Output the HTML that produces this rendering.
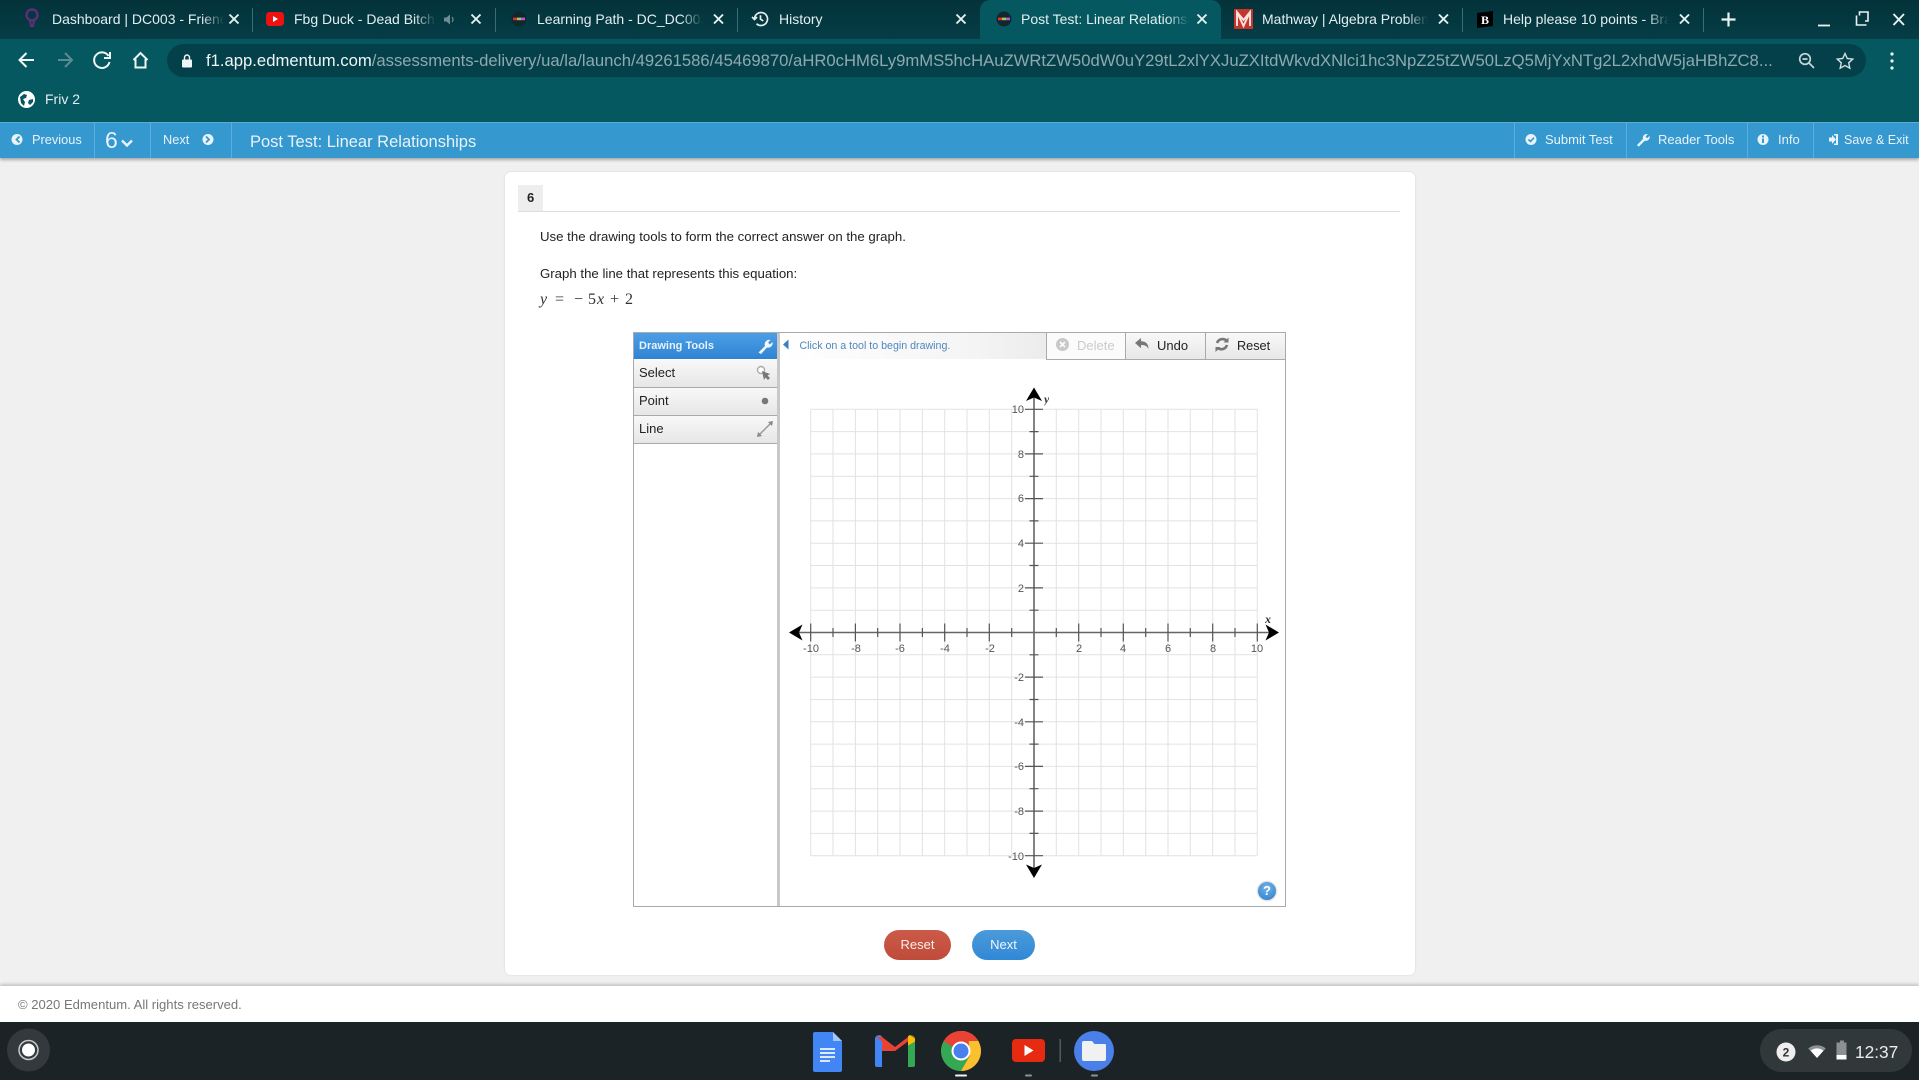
<!DOCTYPE html>
<html><head><meta charset="utf-8"><title>Post Test: Linear Relationships</title>
<style>
html,body{margin:0;padding:0;width:1919px;height:1080px;overflow:hidden;background:#f0f0f0;font-family:"Liberation Sans",sans-serif}
.a{position:absolute}
.t{position:absolute;white-space:nowrap;overflow:hidden}
.tab{color:#e3eef0;font-size:14px;line-height:20px;top:9px;height:20px;-webkit-mask-image:linear-gradient(90deg,#000 calc(100% - 22px),transparent);mask-image:linear-gradient(90deg,#000 calc(100% - 22px),transparent)}
.sep{position:absolute;top:8px;width:1px;height:24px;background:#3e6c73}
.hs{position:absolute;top:123px;width:1px;height:35px;background:#5aaedc}
.hd{position:absolute;top:130px;line-height:20px;font-size:13px;color:#e8f3fa;white-space:nowrap}
.tool{position:absolute;left:634px;width:143px;height:27px;background:linear-gradient(#f8f8f8,#e6e6e6);border-bottom:1px solid #aaa;font-size:13px;line-height:25px;color:#222;text-indent:5px}
.sb{position:absolute;top:333px;height:26px;background:linear-gradient(#f8f8f8,#e8e8e8);border-left:1px solid #aaa;border-bottom:1px solid #aaa;font-size:13px;line-height:26px;color:#222}
.lx{position:absolute;font-size:11px;color:#555;line-height:12px;width:30px;text-align:center;top:643px}
.ly{position:absolute;font-size:11px;color:#555;line-height:12px;width:30px;text-align:right;left:994px}
.m{position:absolute;top:290px;font-family:"Liberation Serif",serif;font-size:16px;line-height:20px;color:#333;white-space:nowrap}
</style></head><body>

<!-- browser chrome -->
<div class="a" style="left:0;top:0;width:1919px;height:39px;background:linear-gradient(#04323a,#053d46)"></div>
<div class="a" style="left:0;top:39px;width:1919px;height:83px;background:#05585f"></div>
<div class="a" style="left:980px;top:0;width:241px;height:39px;background:#05585f;border-radius:10px 10px 0 0"></div>

<svg class="a" style="left:24px;top:7px" width="16" height="24" viewBox="0 0 16 24"><circle cx="8" cy="8" r="5.5" fill="none" stroke="#5b2f78" stroke-width="2.4"/><path d="M6 14l1 5h2l1-5" fill="none" stroke="#5b2f78" stroke-width="2.2"/></svg>
<div class="t tab" style="left:52px;width:172px">Dashboard | DC003 - Friends</div>
<div class="sep" style="left:252px"></div>
<svg class="a" style="left:266px;top:12px" width="18" height="14" viewBox="0 0 18 14"><rect width="18" height="14" rx="3.5" fill="#ee1111"/><path d="M7 4l5 3-5 3z" fill="#fff"/></svg>
<div class="t tab" style="left:294px;width:142px">Fbg Duck - Dead Bitches</div>
<svg class="a" style="left:443px;top:13px" width="13" height="13" viewBox="0 0 13 13"><path d="M1 4.500h2.500L7 1.500v10L3.500 8.500H1z" fill="#6d8f94"/><path d="M9 4a3.500 3.500 0 0 1 0 5" fill="none" stroke="#6d8f94" stroke-width="1.200"/></svg>
<div class="sep" style="left:495px"></div>
<svg class="a" style="left:511px;top:11px" width="16" height="16" viewBox="0 0 16 16"><circle cx="8" cy="8" r="7.500" fill="#10282c"/><rect x="2" y="6.600" width="4" height="2.600" fill="#d33"/><rect x="6" y="6.600" width="4" height="2.600" fill="#9c5"/><rect x="10" y="6.600" width="4" height="2.600" fill="#b5d"/></svg>
<div class="t tab" style="left:537px;width:166px">Learning Path - DC_DC003 -</div>
<div class="sep" style="left:737px"></div>
<svg class="a" style="left:751px;top:10px" width="18" height="18" viewBox="0 0 18 18" fill="none" stroke="#e3eef0" stroke-width="1.700"><path d="M3.500 9a6.500 6.500 0 1 1 2 4.700"/><path d="M1 7l2.500 2.500L6 7"/><path d="M9.500 5.200v4l2.800 1.700"/></svg>
<div class="t tab" style="left:779px;width:100px">History</div>
<svg class="a" style="left:996px;top:11px" width="16" height="16" viewBox="0 0 16 16"><circle cx="8" cy="8" r="7.500" fill="#10282c"/><rect x="2" y="6.600" width="4" height="2.600" fill="#d33"/><rect x="6" y="6.600" width="4" height="2.600" fill="#9c5"/><rect x="10" y="6.600" width="4" height="2.600" fill="#b5d"/></svg>
<div class="t tab" style="left:1021px;width:168px">Post Test: Linear Relationships</div>
<svg class="a" style="left:1234px;top:9px" width="19" height="20" viewBox="0 0 19 20"><rect width="19" height="20" fill="#c4352e"/><path d="M3 17V3l6.500 8L16 3v14M3 3l6.500 14L16 3" fill="none" stroke="#fbe3dc" stroke-width="1.900"/></svg>
<div class="t tab" style="left:1262px;width:166px">Mathway | Algebra Problem</div>
<div class="sep" style="left:1462px"></div>
<svg class="a" style="left:1476px;top:10px" width="18" height="19" viewBox="0 0 18 19"><path d="M1 3l16-2v15L1 18z" fill="#000"/><text x="9" y="14" font-family="Liberation Serif" font-weight="bold" font-size="12" fill="#fff" text-anchor="middle">B</text></svg>
<div class="t tab" style="left:1503px;width:166px">Help please 10 points - Brainly</div>
<div class="sep" style="left:1703px"></div>

<svg class="a" style="left:0;top:0;pointer-events:none" width="1919" height="39" fill="none" stroke="#e9f2f3" stroke-width="1.900">
<path d="M229.500 14.500l9 9M238.500 14.500l-9 9"/>
<path d="M471.500 14.500l9 9M480.500 14.500l-9 9"/>
<path d="M714 14.500l9 9M723 14.500l-9 9"/>
<path d="M956.500 14.500l9 9M965.500 14.500l-9 9"/>
<path d="M1197.500 14.500l9 9M1206.500 14.500l-9 9"/>
<path d="M1439 14.500l9 9M1448 14.500l-9 9"/>
<path d="M1680 14.500l9 9M1689 14.500l-9 9"/>
<path d="M1728.500 12.500v14M1721.500 19.500h14" stroke-width="2.200"/>
<path d="M1818 25.500h12" stroke-width="1.800"/>
<path d="M1856.500 15.500v9.500h10M1859.500 15.500v-3.500h8.500v9h-3" stroke-width="1.600"/>
<path d="M1893.500 14l10.500 11M1904 14l-10.500 11" stroke-width="1.900"/>
</svg>

<!-- toolbar -->
<svg class="a" style="left:0;top:39px" width="170" height="44" fill="none" stroke-width="2">
<path d="M34 21H20M26.500 14l-7 7 7 7" stroke="#f0f5f5"/>
<path d="M58 21h13.500M65 14l7 7-7 7" stroke="#5c8c92"/>
<path d="M108.500 17a7.800 7.800 0 1 0 1 6" stroke="#f0f5f5"/>
<path d="M110 13v6h-6" stroke="#f0f5f5"/>
<path d="M133.500 21l7-7 7 7M135.500 20v8.500h10V20" stroke="#f0f5f5"/>
</svg>
<div class="a" style="left:167px;top:44px;width:1699px;height:33px;border-radius:17px;background:#04404a"></div>
<svg class="a" style="left:181px;top:54px" width="12" height="14" viewBox="0 0 12 14"><rect x="1" y="5.500" width="10" height="8" rx="1" fill="#f0f5f5"/><path d="M3.500 6V3.500a2.500 2.500 0 0 1 5 0V6" fill="none" stroke="#f0f5f5" stroke-width="1.400"/></svg>
<div class="t" style="left:206px;top:50px;width:1580px;height:22px;line-height:22px;font-size:16.67px;color:#8fa9ae"><span style="color:#f0f5f5">f1.app.edmentum.com</span>/assessments-delivery/ua/la/launch/49261586/45469870/aHR0cHM6Ly9mMS5hcHAuZWRtZW50dW0uY29tL2xlYXJuZXItdWkvdXNlci1hc3NpZ25tZW50LzQ5MjYxNTg2L2xhdW5jaHBhZC8...</div>
<svg class="a" style="left:1797px;top:50px" width="110" height="24" fill="none" stroke="#c6d6d8" stroke-width="1.700">
<circle cx="8" cy="9" r="5.300"/><path d="M12 13l5 5M5.500 9h5"/>
<path d="M48 3.500l2.300 5 5.400.6-4 3.700 1.100 5.400-4.800-2.700-4.800 2.700 1.100-5.400-4-3.700 5.400-.6z" stroke-width="1.400" stroke="#d6e0e1"/>
<circle cx="95" cy="4" r="1.600" fill="#f0f5f5" stroke="none"/><circle cx="95" cy="11" r="1.600" fill="#f0f5f5" stroke="none"/><circle cx="95" cy="18" r="1.600" fill="#f0f5f5" stroke="none"/>
</svg>

<!-- bookmarks -->
<svg class="a" style="left:18px;top:91px" width="17" height="17" viewBox="0 0 17 17"><circle cx="8.500" cy="8.500" r="8.500" fill="#fff"/><path d="M2 6l4-3 3 1-1 3-3 1 2 3-1 4-3-3zM11 9l4-1 0 3-3 3-2-2z" fill="#05585f"/></svg>
<div class="t" style="left:45px;top:89px;line-height:20px;font-size:14px;color:#e3eef0">Friv 2</div>

<!-- app header -->
<div class="a" style="left:0;top:122px;width:1919px;height:36px;background:#3598cf;border-top:1px solid #5aaedc;box-sizing:border-box;box-shadow:0 2px 3px rgba(0,0,0,.3)"></div>
<div class="hs" style="left:94px"></div><div class="hs" style="left:150px"></div><div class="hs" style="left:231px"></div>
<div class="hs" style="left:1514px"></div><div class="hs" style="left:1626px"></div><div class="hs" style="left:1747px"></div><div class="hs" style="left:1813px"></div>
<svg class="a" style="left:0;top:122px" width="240" height="36">
<circle cx="17" cy="17.500" r="5.500" fill="#e8f3fa"/><path d="M19.500 14.500l-3 3 3 3" fill="none" stroke="#3598cf" stroke-width="1.800"/>
<circle cx="208" cy="17.500" r="5.500" fill="#e8f3fa"/><path d="M206 14.500l3 3-3 3" fill="none" stroke="#3598cf" stroke-width="1.800"/>
<path d="M122 18.500l5 5 5-5" fill="none" stroke="#e8f3fa" stroke-width="2.400"/>
</svg>
<div class="hd" style="left:32px;font-size:12.800px">Previous</div>
<div class="hd" style="left:105px;top:127px;font-size:23px;line-height:26px">6</div>
<div class="hd" style="left:163px;font-size:12.800px">Next</div>
<div class="hd" style="left:250px;top:132px;font-size:16.500px;line-height:20px">Post Test: Linear Relationships</div>
<svg class="a" style="left:1520px;top:122px" width="320" height="36">
<circle cx="11" cy="17.500" r="5.500" fill="#e8f3fa"/><path d="M8.500 17.500l2 2 3.500-3.800" fill="none" stroke="#3598cf" stroke-width="1.600"/>
<path d="M117 23l6-6a3.800 3.800 0 0 1 4.800-4.800l-2.300 2.300 1.700 1.700 2.300-2.300a3.800 3.800 0 0 1-4.800 4.800l-6 6z" fill="#e8f3fa"/>
<circle cx="243" cy="17.500" r="5.500" fill="#e8f3fa"/><rect x="242" y="16.500" width="2" height="4.500" fill="#3598cf"/><rect x="242" y="13.500" width="2" height="2" fill="#3598cf"/>
<path d="M316 13.500h-2v-1.500h4v11h-4v-1.500h2zM309 15.500h3v-2.500l4 4.500-4 4.500v-2.500h-3z" fill="#e8f3fa"/>
</svg>
<div class="hd" style="left:1545px">Submit Test</div>
<div class="hd" style="left:1658px">Reader Tools</div>
<div class="hd" style="left:1778px">Info</div>
<div class="hd" style="left:1844px;font-size:12.500px">Save &amp; Exit</div>

<!-- content panel -->
<div class="a" style="left:505px;top:172px;width:910px;height:803px;background:#fff;border-radius:6px;box-shadow:0 0 2px rgba(0,0,0,.12)"></div>
<div class="a" style="left:518px;top:185px;width:25px;height:26px;background:#eee"></div>
<div class="a" style="left:518px;top:211px;width:882px;height:1px;background:#ddd"></div>
<div class="t" style="left:527px;top:189px;font-size:13px;line-height:18px;font-weight:bold;color:#222">6</div>
<div class="t" style="left:540px;top:228px;font-size:13.230px;line-height:18px;color:#222">Use the drawing tools to form the correct answer on the graph.</div>
<div class="t" style="left:540px;top:265px;font-size:13.230px;line-height:18px;color:#222">Graph the line that represents this equation:</div>
<div class="m" style="left:540px"><i>y</i></div><div class="m" style="left:555px">=</div><div class="m" style="left:574px">−</div><div class="m" style="left:588px">5</div><div class="m" style="left:597px"><i>x</i></div><div class="m" style="left:610px">+</div><div class="m" style="left:625px">2</div>

<!-- graph widget -->
<div class="a" style="left:633px;top:332px;width:651px;height:573px;border:1px solid #aaa;background:#fff"></div>
<div class="a" style="left:777px;top:333px;width:3px;height:573px;background:#c8c8c8"></div>
<div class="a" style="left:634px;top:333px;width:143px;height:26px;background:linear-gradient(#4c9fe6,#2f83d2);font-size:11px;font-weight:bold;line-height:26px;color:#e8f2fb;text-indent:5px">Drawing Tools</div>
<svg class="a" style="left:757px;top:337px" width="16" height="18" viewBox="0 0 16 18"><path d="M1.500 15.500L8 9a4.500 4.500 0 0 1 5.500-6l-2.500 2.500 2 2L15.500 5A4.500 4.500 0 0 1 10 10.500L4 17z" fill="#f2f7fc"/></svg>
<div class="tool" style="top:360px">Select</div>
<div class="tool" style="top:388px">Point</div>
<div class="tool" style="top:416px">Line</div>
<svg class="a" style="left:750px;top:363px" width="26" height="78">
<circle cx="11" cy="7" r="3.500" fill="#fff" stroke="#aaa" stroke-width="1.400"/><path d="M12 8l8 3-2.500 1.500 2.500 2.500-2 2-2.500-2.500-1.500 2.500z" fill="#777"/>
<circle cx="15" cy="38" r="3.300" fill="#777"/>
<path d="M9 72l12-12" stroke="#999" stroke-width="1.500"/><path d="M7 74l1-5 4 4zM23 58l-5 1 4 4z" fill="#888"/>
</svg>
<div class="a" style="left:780px;top:333px;width:266px;height:26px;background:linear-gradient(90deg,#fff 0%,#f5f5f5 70%,#ececec 100%)"></div>
<svg class="a" style="left:782px;top:338px" width="8" height="14"><path d="M6.500 1.500L1 6.500l5.500 5z" fill="#3b7fc0"/></svg>
<div class="t" style="left:799.500px;top:338px;font-size:10.650px;line-height:16px;color:#4f88bd">Click on a tool to begin drawing.</div>
<div class="sb" style="left:1046px;width:78px;background:#fbfbfb;color:#ccc;text-indent:30px">Delete</div>
<div class="sb" style="left:1125px;width:79px;text-indent:31px">Undo</div>
<div class="sb" style="left:1205px;width:79px;text-indent:31px;font-size:12.700px">Reset</div>
<svg class="a" style="left:1050px;top:334px" width="220" height="24">
<circle cx="12.500" cy="10.500" r="6.500" fill="#c8c8c8"/><path d="M10 8l5 5M15 8l-5 5" stroke="#fbfbfb" stroke-width="1.700"/>
<path d="M85 9l6-5v3.200c5 0 7.500 3 7.500 7.800-1.500-3-3.500-4-7.500-4v3.200z" fill="#777"/>
<path d="M167 9a6 6 0 0 1 9.500-2.500M177 11a6 6 0 0 1-9.500 3" fill="none" stroke="#777" stroke-width="2.600"/><path d="M178.500 3.500v5h-5zM165.500 18v-5h5z" fill="#777"/>
</svg>

<svg class="a" style="left:0;top:0" width="1919" height="1080" fill="none">
<path stroke="#e2e2e2" stroke-width="1" d="M810.700 409.300V855.700M833 409.300V855.700M855.400 409.300V855.700M877.700 409.300V855.700M900 409.300V855.700M922.400 409.300V855.700M944.700 409.300V855.700M967 409.300V855.700M989.300 409.300V855.700M1011.700 409.300V855.700M1056.300 409.300V855.700M1078.700 409.300V855.700M1101 409.300V855.700M1123.300 409.300V855.700M1145.700 409.300V855.700M1168 409.300V855.700M1190.300 409.300V855.700M1212.700 409.300V855.700M1235 409.300V855.700M1257.300 409.300V855.700M810.700 409.300H1257.300M810.700 431.600H1257.300M810.700 453.900H1257.300M810.700 476.300H1257.300M810.700 498.600H1257.300M810.700 520.900H1257.300M810.700 543.200H1257.300M810.700 565.500H1257.300M810.700 587.900H1257.300M810.700 610.200H1257.300M810.700 654.800H1257.300M810.700 677.100H1257.300M810.700 699.500H1257.300M810.700 721.800H1257.300M810.700 744.100H1257.300M810.700 766.400H1257.300M810.700 788.700H1257.300M810.700 811.100H1257.300M810.700 833.400H1257.300M810.700 855.700H1257.300"/>
<path stroke="#666" stroke-width="1.600" d="M795 632.500H1273M1034 394V872"/>
<path stroke="#555" stroke-width="1.200" d="M810.700 623.500V641.500M855.400 623.500V641.500M900 623.500V641.500M944.700 623.500V641.500M989.300 623.500V641.500M1078.700 623.500V641.500M1123.300 623.500V641.500M1168 623.500V641.500M1212.700 623.500V641.500M1257.300 623.500V641.500M833 628V637M877.700 628V637M922.400 628V637M967 628V637M1011.700 628V637M1056.300 628V637M1101 628V637M1145.700 628V637M1190.300 628V637M1235 628V637M1025 409.300H1043M1025 453.900H1043M1025 498.600H1043M1025 543.200H1043M1025 587.900H1043M1025 677.100H1043M1025 721.800H1043M1025 766.400H1043M1025 811.100H1043M1025 855.700H1043M1029.500 431.600H1038.500M1029.500 476.300H1038.500M1029.500 520.900H1038.500M1029.500 565.500H1038.500M1029.500 610.200H1038.500M1029.500 654.800H1038.500M1029.500 699.500H1038.500M1029.500 744.100H1038.500M1029.500 788.700H1038.500M1029.500 833.400H1038.500"/>
<path fill="#000" d="M1034 387.500L1042 401L1034 397.500L1026 401ZM1034 878L1042 864.500L1034 868L1026 864.500ZM789 632.500L802.500 624.500L799 632.500L802.500 640.500ZM1279 632.500L1265.500 624.500L1269 632.500L1265.500 640.500Z"/>
</svg>
<div class="t" style="left:1044px;top:392px;font:italic bold 12px 'Liberation Serif',serif;color:#333">y</div>
<div class="t" style="left:1265px;top:612px;font:italic bold 12px 'Liberation Serif',serif;color:#333">x</div>
<div class="lx" style="left:796px">-10</div><div class="lx" style="left:841px">-8</div><div class="lx" style="left:885px">-6</div><div class="lx" style="left:930px">-4</div><div class="lx" style="left:975px">-2</div>
<div class="lx" style="left:1064px">2</div><div class="lx" style="left:1108px">4</div><div class="lx" style="left:1153px">6</div><div class="lx" style="left:1198px">8</div><div class="lx" style="left:1242px">10</div>
<div class="ly" style="top:404px">10</div><div class="ly" style="top:449px">8</div><div class="ly" style="top:493px">6</div><div class="ly" style="top:538px">4</div><div class="ly" style="top:583px">2</div>
<div class="ly" style="top:672px">-2</div><div class="ly" style="top:717px">-4</div><div class="ly" style="top:761px">-6</div><div class="ly" style="top:806px">-8</div><div class="ly" style="top:851px">-10</div>
<div class="a" style="left:1258px;top:882px;width:18px;height:18px;border-radius:50%;background:radial-gradient(circle at 50% 30%,#6fb2ea,#2d7fc9);box-shadow:0 0 2px rgba(0,0,0,.4);color:#fff;font-size:13px;font-weight:bold;line-height:18px;text-align:center">?</div>

<!-- buttons -->
<div class="a" style="left:884px;top:930px;width:67px;height:30px;border-radius:15px;background:linear-gradient(#cc5a48,#bf4c3b);color:#fdeee9;font-size:13px;line-height:29px;text-align:center">Reset</div>
<div class="a" style="left:972px;top:930px;width:63px;height:30px;border-radius:15px;background:linear-gradient(#4c9ad9,#3089d6);color:#f0f7fd;font-size:13px;line-height:29px;text-align:center">Next</div>

<!-- footer -->
<div class="a" style="left:0;top:986px;width:1919px;height:36px;background:#fff;box-shadow:0 -2px 3px rgba(0,0,0,.18)"></div>
<div class="t" style="left:18px;top:996px;font-size:13.070px;line-height:18px;color:#777">© 2020 Edmentum. All rights reserved.</div>

<!-- shelf -->
<div class="a" style="left:0;top:1022px;width:1919px;height:58px;background:#1b2326"></div>
<svg class="a" style="left:0;top:1022px" width="1919" height="58">
<circle cx="28.500" cy="28" r="21.500" fill="#33393c"/><circle cx="28.500" cy="28" r="9.500" fill="none" stroke="#c8cacb" stroke-width="1.500"/><circle cx="28.500" cy="28" r="6.500" fill="#fff"/>
<path d="M815 10h18l9 9v29a2 2 0 0 1-2 2h-25a2 2 0 0 1-2-2V12a2 2 0 0 1 2-2z" fill="#4285f4"/><path d="M833 10l9 9h-9z" fill="#a6c5fa"/><path d="M820 26h15v2h-15zM820 30h15v2h-15zM820 34h15v2h-15zM820 38h10v2h-10z" fill="#dce8fd"/>
<path d="M875 17a4 4 0 0 1 7-2.500v30.500h-5a2 2 0 0 1-2-2z" fill="#4285f4"/><path d="M915 17a4 4 0 0 0-7-2.500v30.500h5a2 2 0 0 0 2-2z" fill="#34a853"/><path d="M876 15l19 14 19-14-6 0-13 10-13-10z" fill="#ea4335"/><path d="M882 14.500V29l13 0-13-10zM908 14.500l6 0 1 3-7 5z" fill="#ea4335"/><path d="M908 14.500l1.500-1.500 5.500 3.500v3l-7 4z" fill="#fbbc04"/>
<circle cx="961" cy="29" r="20" fill="#ea4335"/><path d="M961 29L943.700 19A20 20 0 0 0 961 49l8-14z" fill="#34a853"/><path d="M961 9a20 20 0 0 1 17.300 30A20 20 0 0 1 961 49l8.700-15-1-15h9.500A20 20 0 0 1 978 19z" fill="#fbc02d"/><path d="M961 9a20 20 0 0 1 17.300 10H961a10 10 0 0 0-9 5.500L943.700 19A20 20 0 0 1 961 9z" fill="#ea4335"/><circle cx="961" cy="29" r="9.500" fill="#fff"/><circle cx="961" cy="29" r="7.500" fill="#4a80ee"/>
<rect x="1012" y="17" width="33" height="23" rx="4" fill="#e62b12"/><path d="M1024.500 23l9 5.500-9 5.500z" fill="#fff"/>
<rect x="1059.500" y="17" width="1.500" height="23" fill="#555b5d"/>
<circle cx="1094" cy="29" r="20" fill="#4a80e8"/><path d="M1084 19h8l2.500 3H1105a1 1 0 0 1 1 1v14a2 2 0 0 1-2 2h-20a2 2 0 0 1-2-2V21a2 2 0 0 1 2-2z" fill="#f1f1f1"/>
<rect x="955" y="52.500" width="12" height="2" rx="1" fill="#f2f2f2"/><rect x="1025" y="52.500" width="7" height="2" rx="1" fill="#8e9395"/><rect x="1091" y="52.500" width="7" height="2" rx="1" fill="#8e9395"/>
<rect x="1760" y="7" width="152" height="43" rx="21.500" fill="#31383a"/>
<circle cx="1786" cy="30" r="9.500" fill="#eee"/><text x="1786" y="34.500" font-family="Liberation Sans" font-weight="bold" font-size="12" fill="#333" text-anchor="middle">2</text>
<path d="M1808.500 26.500a13 13 0 0 1 17 0l-8.500 9.500z" fill="#fff"/>
<path d="M1808.500 26.500a13 13 0 0 1 17 0l-2 2.300a10 10 0 0 0-13 0z" fill="#8b9092"/>
<path d="M1836.500 20.500h3.500v-2h4v2h2.500v17h-10z" fill="#8b9092"/><rect x="1836.500" y="33" width="10" height="4.500" fill="#fff"/>
</svg>
<div class="t" style="left:1855px;top:1041px;font-size:17.300px;line-height:22px;color:#e9ecec">12:37</div>
</body></html>
